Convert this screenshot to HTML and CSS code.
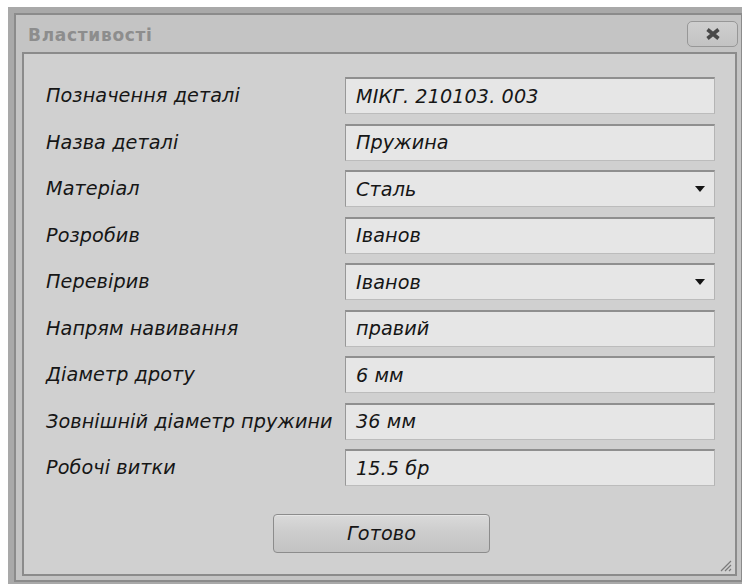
FILE: index.html
```html
<!DOCTYPE html>
<html lang="uk">
<head>
<meta charset="utf-8">
<title>Властивості</title>
<link rel="stylesheet" href="styles.css">
</head>
<body>
<div class="desk">
  <div class="dialog">
    <div class="titlebar">
      <span class="title">Властивості</span>
      <button class="close" type="button" aria-label="Закрити">
        <svg width="16" height="12" viewBox="0 0 16 12"><path d="M2.5 1.5 L13.5 10.5 M13.5 1.5 L2.5 10.5" stroke="#484848" stroke-width="3.6" stroke-linecap="butt"/></svg>
      </button>
    </div>
    <div class="panel">
      <div class="form">
        <div class="label">Позначення деталі</div>
        <div class="field">МІКГ. 210103. 003</div>

        <div class="label">Назва деталі</div>
        <div class="field">Пружина</div>

        <div class="label">Матеріал</div>
        <div class="field select">Сталь<span class="arrow"></span></div>

        <div class="label">Розробив</div>
        <div class="field">Іванов</div>

        <div class="label">Перевірив</div>
        <div class="field select">Іванов<span class="arrow"></span></div>

        <div class="label">Напрям навивання</div>
        <div class="field">правий</div>

        <div class="label">Діаметр дроту</div>
        <div class="field">6 мм</div>

        <div class="label">Зовнішній діаметр пружини</div>
        <div class="field">36 мм</div>

        <div class="label">Робочі витки</div>
        <div class="field">15.5 бр</div>
      </div>
      <div class="actions">
        <button class="done" type="button">Готово</button>
      </div>
      <svg class="grip" width="12" height="12" viewBox="0 0 12 12">
        <path d="M1 11 L11 1 M5 11 L11 5 M9 11 L11 9" stroke="#7a7a7a" stroke-width="1.2"/>
      </svg>
    </div>
  </div>
</div>
</body>
</html>
```

FILE: styles.css
```css
html, body {
  margin: 0;
  padding: 0;
  background: #ffffff;
  overflow: hidden;
}

.desk {
  margin: 7px 0 0 8px;
  height: 577px;
  background: #a9a9a9;
  padding: 6px 0 2px 6px;
  box-sizing: border-box;
}

.dialog {
  width: 729px;
  height: 569px;
  box-sizing: border-box;
  border: 2px solid #8b8b8b;
  background: #c4c4c4;
  display: flex;
  flex-direction: column;
}

.titlebar {
  height: 37px;
  flex: none;
  display: flex;
  align-items: flex-start;
  justify-content: space-between;
  padding: 0 3px 0 12px;
}

.title {
  margin-top: 10px;
  font-family: "DejaVu Sans", sans-serif;
  font-weight: bold;
  font-size: 17px;
  letter-spacing: 0.7px;
  color: #8d8d8d;
  line-height: 20px;
}

.close {
  margin-top: 6px;
  width: 51px;
  height: 26px;
  padding: 0;
  border: 1px solid #979797;
  border-radius: 5px;
  background: linear-gradient(#cfcfcf, #c3c3c3);
  display: flex;
  align-items: center;
  justify-content: center;
}

.panel {
  position: relative;
  flex: 1;
  margin: 0 4px 4px 6px;
  border: 2px solid #8b8b8b;
  background: #d0d0d0;
  padding: 23px 20px 0 22px;
  display: flex;
  flex-direction: column;
}

.form {
  display: grid;
  grid-template-columns: 299px 370px;
  grid-auto-rows: 37px;
  row-gap: 9.5px;
}

.label,
.field,
.done {
  font-family: "DejaVu Sans", sans-serif;
  font-style: italic;
  font-size: 19.2px;
  letter-spacing: 0.1px;
  color: #161616;
}

.label {
  display: flex;
  align-items: center;
  white-space: nowrap;
}

.field {
  box-sizing: border-box;
  display: flex;
  align-items: center;
  justify-content: space-between;
  padding: 0 9px 0 10px;
  background: #e6e6e6;
  border: 1px solid #a6a6a6;
  border-top: 2px solid #8f8f8f;
  border-left-color: #989898;
  border-bottom-color: #bcbcbc;
  border-right-color: #b4b4b4;
  white-space: nowrap;
}

.arrow {
  width: 0;
  height: 0;
  border-left: 5px solid transparent;
  border-right: 5px solid transparent;
  border-top: 6px solid #141414;
}

.actions {
  display: flex;
  justify-content: center;
  margin-top: 28px;
  margin-right: -2px;
}

.done {
  width: 217px;
  height: 39px;
  border: 1px solid #8c8c8c;
  border-radius: 4px;
  background: linear-gradient(#dadada 0%, #cdcdcd 45%, #c3c3c3 100%);
  box-shadow: inset 0 1px 0 #e6e6e6;
  padding: 0;
}

.grip {
  position: absolute;
  right: 3px;
  bottom: 2px;
}
```
